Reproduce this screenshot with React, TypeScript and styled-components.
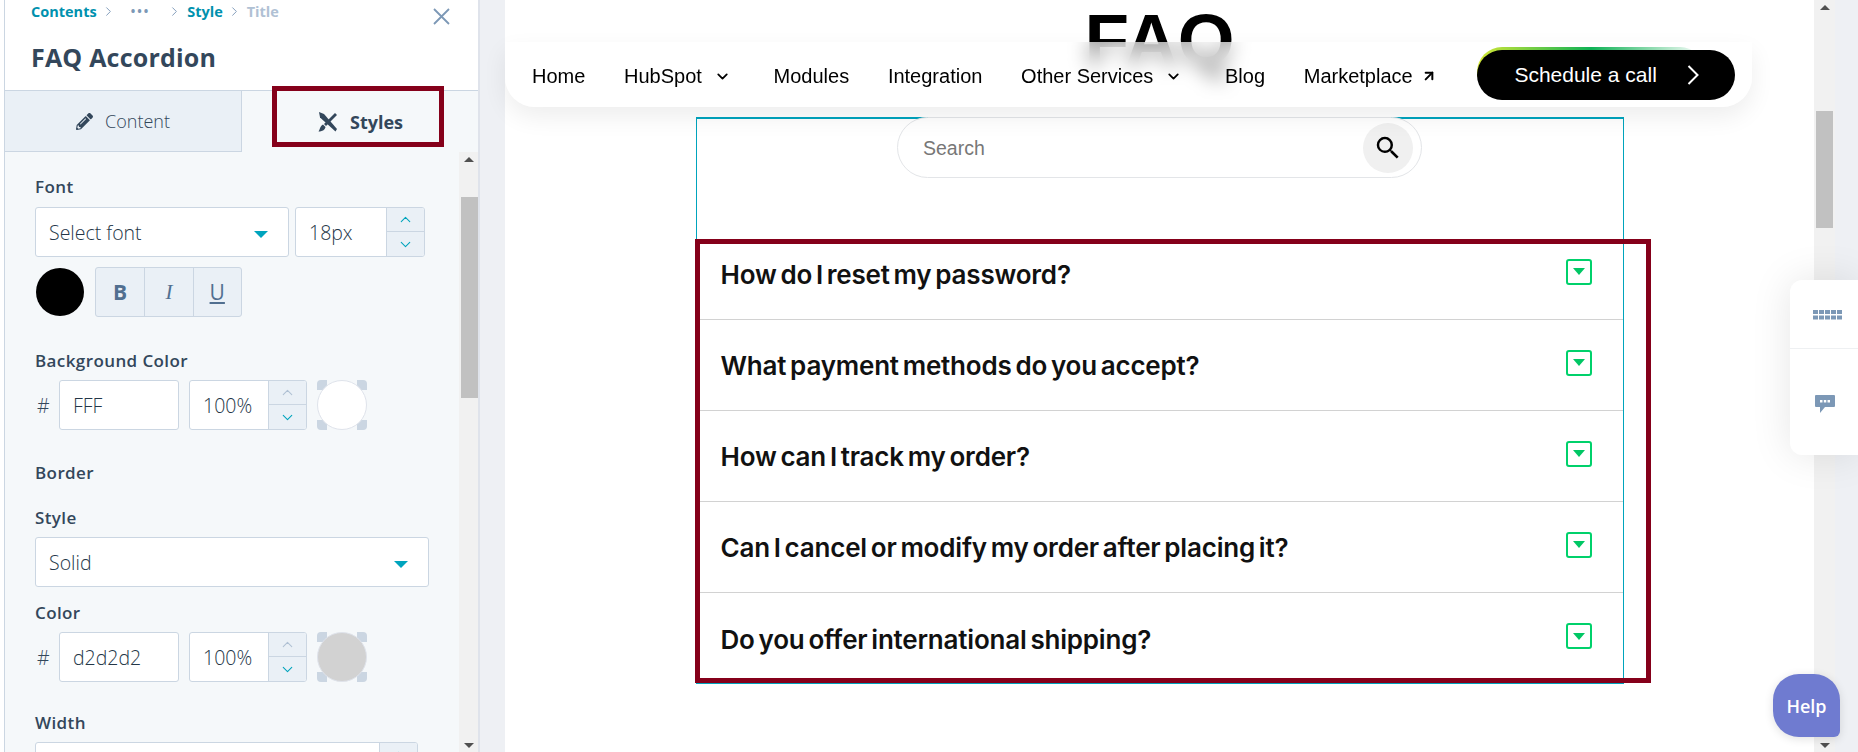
import { ChevronDown, ChevronUp, ChevronRight, ArrowUpRight } from 'lucide-react';
import { FaPencilAlt } from 'react-icons/fa';
import { MdSearch } from 'react-icons/md';
import styled, { createGlobalStyle } from 'styled-components';

const Global = createGlobalStyle`
  html, body {
    margin: 0;
    padding: 0;
    height: 100%;
    overflow: hidden;
    background: #fff;
  }
  * {
    box-sizing: border-box;
  }
`;

const Screen = styled.div`
  display: flex;
  width: 1858px;
  height: 752px;
  overflow: hidden;
  position: relative;
  font-family: 'Open Sans', 'Liberation Sans', sans-serif;
  color: #33475b;
`;

const Sidebar = styled.aside`
  flex: 0 0 476px;
  display: flex;
  flex-direction: column;
  margin-left: 4px;
  border-left: 1px solid #cbd6e2;
  border-right: 2px solid #dfe3eb;
  background: #f5f8fa;
  position: relative;
`;

const SideHeader = styled.div`
  height: 91px;
  flex: none;
  padding: 0 0 0 26px;
  background: #fff;
  border-bottom: 1px solid #cbd6e2;
  position: relative;
`;

const Crumbs = styled.div`
  display: flex;
  align-items: center;
  height: 22px;
  font-size: 14.500px;
  font-weight: 700;
`;

const Crumb = styled.span<{ $muted?: boolean }>`
  color: ${(props) => (props.$muted ? '#b0c1d4' : '#0091ae')};
`;

const CrumbSep = styled(ChevronRight)`
  color: #7c98b6;
  margin: 0 5px 0 4px;
`;

const CrumbDots = styled.span`
  color: #7c98b6;
  letter-spacing: 2px;
  margin: 0 13px 0 10px;
  font-size: 12px;
`;

const Close = styled.button`
  position: absolute;
  right: 28px;
  top: 8px;
  padding: 0;
  border: 0;
  background: none;
  color: #7c98b6;
  display: flex;
`;

const PanelTitle = styled.h2`
  margin: 11px 0 0;
  font-size: 25px;
  line-height: 48px;
  height: 48px;
  font-weight: 700;
  letter-spacing: 0.200px;
  color: #33475b;
`;

const Tabs = styled.div`
  display: grid;
  grid-template-columns: 237px 1fr;
  height: 61px;
  flex: none;
`;

const Tab = styled.div<{ $active?: boolean }>`
  display: flex;
  align-items: center;
  justify-content: center;
  gap: 12px;
  font-size: 18px;
  font-weight: ${(props) => (props.$active ? 700 : 300)};
  background: ${(props) => (props.$active ? 'transparent' : '#eaf0f6')};
  border-right: ${(props) => (props.$active ? '0' : '1px solid #cbd6e2')};
  border-bottom: ${(props) => (props.$active ? '0' : '1px solid #cbd6e2')};
  padding-left: ${(props) => (props.$active ? '1px' : '0')};
`;

const Mark = styled.div`
  position: absolute;
  border: 5px solid #85001a;
  pointer-events: none;
  z-index: 5;
`;

const StylesMark = styled(Mark)`
  left: 267px;
  top: 86px;
  width: 172px;
  height: 61px;
`;

const SideBody = styled.div`
  flex: 1;
  min-height: 0;
  position: relative;
  padding-left: 30px;
  overflow: hidden;
`;

const Track = styled.div<{ $page?: boolean }>`
  position: absolute;
  top: 0;
  right: 0;
  bottom: 0;
  width: ${(props) => (props.$page ? '21px' : '19px')};
  background: #f1f1f1;
`;

const Thumb = styled.div<{ $top: number; $height: number; $page?: boolean }>`
  position: absolute;
  top: ${(props) => props.$top}px;
  height: ${(props) => props.$height}px;
  left: 2px;
  right: ${(props) => (props.$page ? '2px' : '0')};
  background: #c1c1c1;
`;

const TrackArrow = styled.div<{ $down?: boolean }>`
  position: absolute;
  left: 50%;
  margin-left: -5px;
  ${(props) => (props.$down ? 'bottom: 4px;' : 'top: 5px;')}
  width: 0;
  height: 0;
  border-left: 5px solid transparent;
  border-right: 5px solid transparent;
  ${(props) =>
    props.$down ? 'border-top: 5px solid #505050;' : 'border-bottom: 5px solid #505050;'}
`;

const Label = styled.div<{ $mt: number }>`
  margin-top: ${(props) => props.$mt}px;
  height: 20px;
  line-height: 20px;
  font-size: 17px;
  font-weight: 600;
  letter-spacing: 0.400px;
`;

const Row = styled.div<{ $mt?: number }>`
  display: flex;
  align-items: center;
  margin-top: ${(props) => props.$mt ?? 9}px;
`;

const Field = styled.div<{ $width: number; $ml?: number }>`
  width: ${(props) => props.$width}px;
  margin-left: ${(props) => props.$ml ?? 0}px;
  height: 50px;
  display: flex;
  align-items: center;
  flex: none;
  background: #fff;
  border: 1px solid #cbd6e2;
  border-radius: 3px;
  overflow: hidden;
  font-size: 19.500px;
  font-weight: 300;
  color: #243647;
  padding-left: 13px;
  position: relative;
`;

const Caret = styled.span`
  position: absolute;
  right: 20px;
  top: 23px;
  width: 0;
  height: 0;
  border-left: 7px solid transparent;
  border-right: 7px solid transparent;
  border-top: 7px solid #00a4bd;
`;

const Stepper = styled.div`
  position: absolute;
  right: 0;
  top: 0;
  bottom: 0;
  width: 38px;
  display: grid;
  grid-template-rows: 1fr 1fr;
  background: #eaf0f6;
  border-left: 1px solid #cbd6e2;
`;

const Step = styled.div<{ $off?: boolean; $top?: boolean }>`
  display: flex;
  align-items: center;
  justify-content: center;
  color: ${(props) => (props.$off ? '#b0c1d4' : '#00a4bd')};
  ${(props) => props.$top && 'border-bottom: 1px solid #cbd6e2;'}
`;

const Dot = styled.div`
  width: 48px;
  height: 48px;
  border-radius: 50%;
  background: #000;
  margin-left: 1px;
`;

const Format = styled.div`
  display: flex;
  height: 50px;
  margin-left: 11px;
  border: 1px solid #cbd6e2;
  border-radius: 3px;
  background: #eaf0f6;
`;

const FormatBtn = styled.div`
  width: 48.300px;
  display: flex;
  align-items: center;
  justify-content: center;
  color: #516f90;
  font-size: 21px;
  & + & {
    border-left: 1px solid #cbd6e2;
  }
`;

const Hash = styled.span`
  width: 24px;
  padding-left: 2px;
  font-size: 19.500px;
  font-weight: 300;
  flex: none;
`;

const Swatch = styled.div<{ $color: string }>`
  width: 50px;
  height: 50px;
  margin-left: 10px;
  flex: none;
  display: flex;
  border-radius: 4px;
  background:
    linear-gradient(#cbd6e2, #cbd6e2) 0 0 / 10px 10px no-repeat,
    linear-gradient(#cbd6e2, #cbd6e2) 100% 0 / 10px 10px no-repeat,
    linear-gradient(#cbd6e2, #cbd6e2) 0 100% / 10px 10px no-repeat,
    linear-gradient(#cbd6e2, #cbd6e2) 100% 100% / 10px 10px no-repeat;
  &::after {
    content: '';
    flex: 1;
    border-radius: 50%;
    background: ${(props) => props.$color};
    border: 1px solid #dfe3eb;
  }
`;

const Gutter = styled.div<{ $width: number }>`
  flex: 0 0 ${(props) => props.$width}px;
  background: #eef0f4;
`;

const Page = styled.main`
  flex: 0 0 1330px;
  position: relative;
  background: #fff;
  padding-right: 21px;
`;

const BigTitle = styled.h1`
  margin: 0;
  height: 117px;
  text-align: center;
  font-family: 'Liberation Sans', sans-serif;
  font-size: 73px;
  font-weight: 700;
  line-height: 80px;
  color: #000;
`;

const Nav = styled.nav`
  position: absolute;
  left: 0;
  top: 42px;
  width: 1247px;
  height: 65px;
  display: flex;
  align-items: center;
  padding: 3px 0 0 27px;
  gap: 38.700px;
  background: rgba(255, 255, 255, 0.62);
  backdrop-filter: blur(10px);
  border-radius: 0 0 30px 30px;
  box-shadow: 0 10px 25px rgba(0, 0, 0, 0.07);
  font-family: 'Liberation Sans', sans-serif;
  font-size: 20px;
  color: #000;
  z-index: 3;
  isolation: isolate;
`;

const NavItem = styled.a<{ $icon?: boolean }>`
  display: flex;
  align-items: center;
  gap: ${(props) => (props.$icon ? '12px' : '8px')};
  white-space: nowrap;
  padding-right: ${(props) => (props.$icon ? '4px' : '0')};
`;

const CallButton = styled.button`
  position: relative;
  margin-left: 2px;
  width: 258px;
  height: 50px;
  margin-top: -3px;
  display: flex;
  align-items: center;
  justify-content: space-between;
  padding: 0 36px 0 37px;
  background: #000;
  color: #fff;
  border: 0;
  border-radius: 25px;
  font-family: 'Liberation Sans', sans-serif;
  font-size: 21px;
  &::before {
    content: '';
    position: absolute;
    z-index: -1;
    left: 0;
    right: 30px;
    top: -3px;
    height: 30px;
    border-radius: 25px 25px 0 0;
    background: linear-gradient(90deg, #d5e835, #0fb155 50%, #fff);
  }
`;

const Content = styled.section`
  width: 928px;
  height: 567px;
  margin: 0 auto;
  border: 1px solid #00a4bd;
  border-top-width: 2px;
`;

const SearchBox = styled.div`
  width: 525px;
  height: 61px;
  margin: -2px auto 0;
  padding: 2px 8px 0 25px;
  display: flex;
  align-items: center;
  justify-content: space-between;
  background: #fff;
  border: 1px solid #e3e5e8;
  border-radius: 31px;
  font-family: 'Liberation Sans', sans-serif;
  font-size: 19.500px;
  color: #777;
  position: relative;
`;

const SearchBtn = styled.div`
  width: 50px;
  height: 50px;
  margin-top: -2px;
  border-radius: 50%;
  background: #f0f0f0;
  color: #000;
  display: flex;
  align-items: center;
  justify-content: center;
`;

const Faq = styled.div`
  margin-top: 51px;
`;

const FaqRow = styled.div`
  height: 91px;
  padding: 1px 31px 0 24px;
  display: flex;
  align-items: center;
  justify-content: space-between;
  border-bottom: 1px solid #d2d2d2;
  &:last-child {
    border-bottom: 0;
  }
`;

const Question = styled.span`
  font-family: 'Inter', sans-serif;
  font-size: 26px;
  font-weight: 600;
  color: #111;
  word-spacing: -2.500px;
  letter-spacing: -0.200px;
`;

const ToggleBox = styled.span`
  width: 26px;
  height: 26px;
  margin-top: -6px;
  display: flex;
  align-items: center;
  justify-content: center;
  border: 2.500px solid #00d16b;
  border-radius: 3px;
  &::after {
    content: '';
    width: 0;
    height: 0;
    border-left: 6.500px solid transparent;
    border-right: 6.500px solid transparent;
    border-top: 7px solid #00c764;
  }
`;

const FaqMark = styled(Mark)`
  left: 190px;
  top: 239px;
  width: 956px;
  height: 444px;
`;

const Dock = styled.div`
  position: absolute;
  right: 0;
  top: 280px;
  width: 68px;
  height: 175px;
  display: flex;
  flex-direction: column;
  background: #fff;
  border-radius: 12px 0 0 12px;
  box-shadow: 0 0 40px rgba(0, 0, 0, 0.1);
  z-index: 6;
`;

const DockCell = styled.div<{ $first?: boolean }>`
  display: flex;
  align-items: center;
  justify-content: center;
  height: ${(props) => (props.$first ? '69px' : '106px')};
  padding: ${(props) => (props.$first ? '2px 0 0 7px' : '3px 0 0 2px')};
  border-bottom: ${(props) => (props.$first ? '1px solid #eef0f2' : '0')};
`;

const Help = styled.div`
  position: absolute;
  left: 1773px;
  top: 674px;
  width: 67px;
  height: 63px;
  display: flex;
  align-items: center;
  justify-content: center;
  background: #6f7bd0;
  color: #fff;
  border-radius: 26px 26px 6px 26px;
  font-family: 'Open Sans', sans-serif;
  font-size: 18px;
  font-weight: 600;
  box-shadow: 0 2px 10px rgba(0, 0, 0, 0.12);
  z-index: 7;
`;

const questions = [
  'How do I reset my password?',
  'What payment methods do you accept?',
  'How can I track my order?',
  'Can I cancel or modify my order after placing it?',
  'Do you offer international shipping?',
];

const Stepped = ({ upOff }: { upOff?: boolean }) => (
  <Stepper>
    <Step $top $off={upOff}>
      <ChevronUp size={17} strokeWidth={1.5} />
    </Step>
    <Step>
      <ChevronDown size={17} strokeWidth={1.5} />
    </Step>
  </Stepper>
);

const ColorRow = ({ hex, swatch }: { hex: string; swatch: string }) => (
  <Row>
    <Hash>#</Hash>
    <Field $width={120}>{hex}</Field>
    <Field $width={118} $ml={10}>
      100%
      <Stepped upOff />
    </Field>
    <Swatch $color={swatch} />
  </Row>
);

const App = () => {
  return (
    <Screen>
      <Global />
      <Sidebar>
        <SideHeader>
          <Crumbs>
            <Crumb>Contents</Crumb>
            <CrumbSep size={15} strokeWidth={1.5} />
            <CrumbDots>•••</CrumbDots>
            <CrumbSep size={15} strokeWidth={1.5} />
            <Crumb>Style</Crumb>
            <CrumbSep size={15} strokeWidth={1.5} />
            <Crumb $muted>Title</Crumb>
          </Crumbs>
          <Close>
            <svg width="17" height="17" viewBox="0 0 17 17" stroke="currentColor" strokeWidth="1.8">
              <path d="M1 1l15 15M16 1L1 16" />
            </svg>
          </Close>
          <PanelTitle>FAQ Accordion</PanelTitle>
        </SideHeader>
        <Tabs>
          <Tab>
            <FaPencilAlt size={17} />
            Content
          </Tab>
          <Tab $active>
            <svg width="20" height="20" viewBox="0 0 20 20" fill="#33475b">
              <path d="M1 0l5 2 13 15-1.500 2.500L2 5.500z" />
              <path d="M17 1l2 2L8 14l-2-2z" />
              <path d="M5 12.500l2.500 2.500c-.5 3-3.500 4.500-7 4.500 1.500-1.500 1-5 4.500-7z" />
            </svg>
            Styles
          </Tab>
        </Tabs>
        <StylesMark />
        <SideBody>
          <Track>
            <TrackArrow />
            <Thumb $top={45} $height={201} />
            <TrackArrow $down />
          </Track>
          <Label $mt={25}>Font</Label>
          <Row $mt={10}>
            <Field $width={254}>
              Select font
              <Caret />
            </Field>
            <Field $width={130} $ml={6}>
              18px
              <Stepped />
            </Field>
          </Row>
          <Row $mt={10}>
            <Dot />
            <Format>
              <FormatBtn>
                <b>B</b>
              </FormatBtn>
              <FormatBtn>
                <i style={{ fontFamily: 'Liberation Serif' }}>I</i>
              </FormatBtn>
              <FormatBtn>
                <u>U</u>
              </FormatBtn>
            </Format>
          </Row>
          <Label $mt={34}>Background Color</Label>
          <ColorRow hex="FFF" swatch="#fff" />
          <Label $mt={33}>Border</Label>
          <Label $mt={25}>Style</Label>
          <Row>
            <Field $width={394}>
              Solid
              <Caret />
            </Field>
          </Row>
          <Label $mt={16}>Color</Label>
          <ColorRow hex="d2d2d2" swatch="#d2d2d2" />
          <Label $mt={31}>Width</Label>
          <Row>
            <Field $width={383}>
              <Stepped />
            </Field>
          </Row>
        </SideBody>
      </Sidebar>
      <Gutter $width={25} />
      <Page>
        <BigTitle>FAQ</BigTitle>
        <Nav>
          <NavItem>Home</NavItem>
          <NavItem $icon>
            HubSpot
            <ChevronDown size={17} strokeWidth={2.5} />
          </NavItem>
          <NavItem>Modules</NavItem>
          <NavItem>Integration</NavItem>
          <NavItem $icon>
            Other Services
            <ChevronDown size={17} strokeWidth={2.5} />
          </NavItem>
          <NavItem>Blog</NavItem>
          <NavItem>
            Marketplace
            <ArrowUpRight size={16} strokeWidth={3} />
          </NavItem>
          <CallButton>
            Schedule a call
            <svg width="12" height="20" viewBox="0 0 12 20" fill="none" stroke="#fff" strokeWidth="2">
              <path d="M1.500 1l9 9-9 9" />
            </svg>
          </CallButton>
        </Nav>
        <Content>
          <SearchBox>
            Search
            <SearchBtn>
              <MdSearch size={30} />
            </SearchBtn>
          </SearchBox>
          <Faq>
            {questions.map((question) => (
              <FaqRow key={question}>
                <Question>{question}</Question>
                <ToggleBox />
              </FaqRow>
            ))}
          </Faq>
        </Content>
        <FaqMark />
        <Track $page>
          <TrackArrow />
          <Thumb $page $top={111} $height={117} />
          <TrackArrow $down />
        </Track>
      </Page>
      <Gutter $width={23} />
      <Dock>
        <DockCell $first>
          <svg width="30" height="10" viewBox="0 0 30 10" fill="#7c98b6">
            {[0, 6, 12, 18, 24].map((x) => (
              <g key={x}>
                <rect x={x} y="0" width="5" height="4" />
                <rect x={x} y="5.500" width="5" height="4" />
              </g>
            ))}
          </svg>
        </DockCell>
        <DockCell>
          <svg width="20" height="18" viewBox="0 0 20 18" fill="#7c98b6">
            <path
              fillRule="evenodd"
              d="M1 0h18a1 1 0 0 1 1 1v10a1 1 0 0 1-1 1H10l-5 6v-6H1a1 1 0 0 1-1-1V1a1 1 0 0 1 1-1zM5 5v2.500h2.500V5zM8.800 5v2.500h2.500V5zM12.500 5v2.500H15V5z"
            />
          </svg>
        </DockCell>
      </Dock>
      <Help>Help</Help>
    </Screen>
  );
};

export default App;
